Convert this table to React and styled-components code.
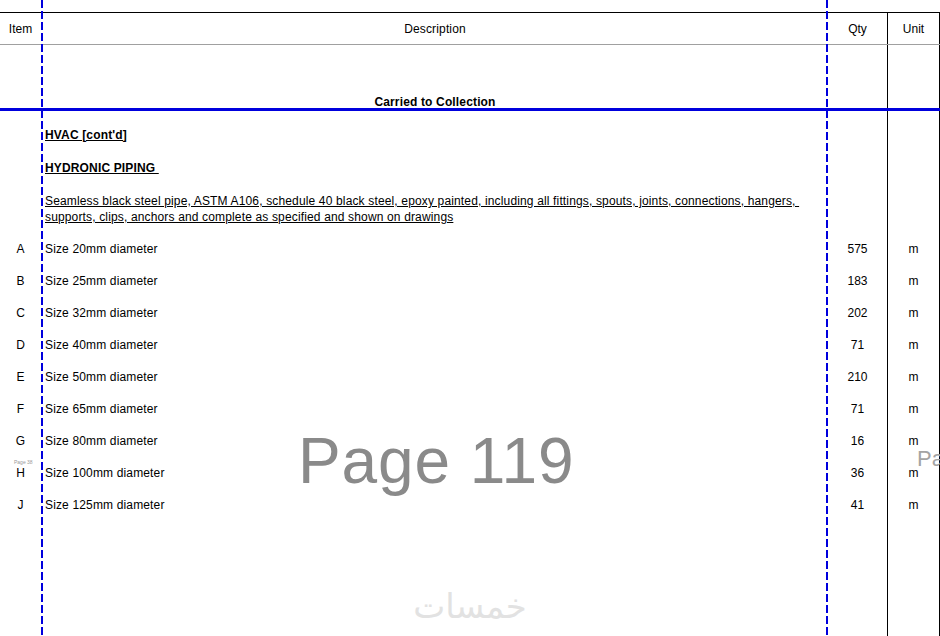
import styled, { createGlobalStyle } from "styled-components";

const items = [
  { id: "A", text: "Size 20mm diameter", qty: 575 },
  { id: "B", text: "Size 25mm diameter", qty: 183 },
  { id: "C", text: "Size 32mm diameter", qty: 202 },
  { id: "D", text: "Size 40mm diameter", qty: 71 },
  { id: "E", text: "Size 50mm diameter", qty: 210 },
  { id: "F", text: "Size 65mm diameter", qty: 71 },
  { id: "G", text: "Size 80mm diameter", qty: 16 },
  { id: "H", text: "Size 100mm diameter", qty: 36 },
  { id: "J", text: "Size 125mm diameter", qty: 41 },
];

const App = () => {
  return (
    <>
      <GlobalStyle />
      <Sheet>
        <Row $height={33} $header>
          <ItemCell>Item</ItemCell>
          <DescCell $center>Description</DescCell>
          <QtyCell>Qty</QtyCell>
          <UnitCell>Unit</UnitCell>
        </Row>
        <Row $height={66} $pageBreak $end>
          <ItemCell />
          <DescCell $center $bold>Carried to Collection</DescCell>
          <QtyCell />
          <UnitCell />
        </Row>
        <Row $height={7}>
          <ItemCell />
          <DescCell />
          <QtyCell />
          <UnitCell />
        </Row>
        <Row $height={33}>
          <ItemCell />
          <DescCell>
            <Heading>HVAC [cont'd]</Heading>
          </DescCell>
          <QtyCell />
          <UnitCell />
        </Row>
        <Row $height={33}>
          <ItemCell />
          <DescCell>
            <Heading>HYDRONIC PIPING&nbsp;</Heading>
          </DescCell>
          <QtyCell />
          <UnitCell />
        </Row>
        <Row $height={49} $padTop={1}>
          <ItemCell />
          <DescCell>
            <Spec>
              Seamless black steel pipe, ASTM A106, schedule 40 black steel, epoxy painted,
              including all fittings, spouts, joints, connections, hangers,&nbsp;
              <br />
              supports, clips, anchors and complete as specified and shown on drawings
            </Spec>
          </DescCell>
          <QtyCell />
          <UnitCell />
        </Row>
        {items.map((item) => (
          <Row key={item.id} $height={32}>
            <ItemCell>{item.id}</ItemCell>
            <DescCell>{item.text}</DescCell>
            <QtyCell>{item.qty}</QtyCell>
            <UnitCell>m</UnitCell>
          </Row>
        ))}
        <Row $fill>
          <ItemCell />
          <DescCell />
          <QtyCell />
          <UnitCell />
        </Row>

        <PageBreak $left={41} />
        <PageBreak $left={826} />
        <PageMark>Page 119</PageMark>
        <NextPageMark>Pa</NextPageMark>
        <TinyMark>Page 38</TinyMark>
        <Brand>خمسات</Brand>
      </Sheet>
    </>
  );
};

const GlobalStyle = createGlobalStyle`
  html, body {
    margin: 0;
    padding: 0;
    background: #fff;
    overflow: hidden;
  }
  body {
    font-family: "Liberation Sans", Arial, sans-serif;
    font-size: 12px;
    color: #000;
  }
`;

const Sheet = styled.div`
  position: relative;
  width: 940px;
  height: 636px;
  padding-top: 12px;
  box-sizing: border-box;
  display: flex;
  flex-direction: column;
  overflow: hidden;
`;

const Row = styled.div`
  display: grid;
  grid-template-columns: 42px 786px 60px 52px;
  box-sizing: border-box;
  height: ${(p) => (p.$height ? `${p.$height}px` : "auto")};
  flex: ${(p) => (p.$fill ? 1 : "none")};
  align-items: ${(p) => (p.$end ? "end" : "center")};
  border-top: ${(p) => (p.$header ? "1px solid #000" : "none")};
  border-bottom: ${(p) =>
    p.$header ? "1px solid #a0a0a0" : p.$pageBreak ? "3px solid #0000dd" : "none"};
  line-height: ${(p) => (p.$end ? "12px" : "normal")};

  & > div {
    height: 100%;
    box-sizing: border-box;
    padding-top: ${(p) => p.$padTop || 0}px;
    display: flex;
    align-items: ${(p) => (p.$end ? "flex-end" : "center")};
  }
`;

const ItemCell = styled.div`
  justify-content: center;
  padding-right: 1px;
`;

const DescCell = styled.div`
  justify-content: ${(p) => (p.$center ? "center" : "flex-start")};
  padding-left: ${(p) => (p.$center ? "0" : "3px")};
  font-weight: ${(p) => (p.$bold ? 700 : 400)};
  letter-spacing: 0.15px;
`;

const QtyCell = styled.div`
  justify-content: center;
  border-right: 1px solid #000;
`;

const UnitCell = styled.div`
  justify-content: center;
  border-right: 1px solid #000;
`;

const Heading = styled.span`
  font-weight: 700;
  text-decoration: underline;
`;

const Spec = styled.span`
  display: block;
  line-height: 16px;
  text-decoration: underline;
`;

const PageBreak = styled.div`
  position: absolute;
  top: 0;
  bottom: 0;
  left: ${(p) => p.$left}px;
  width: 2px;
  background: repeating-linear-gradient(
    to bottom,
    #0000dd 0 8px,
    transparent 8px 11px
  );

  &::before {
    content: "";
    position: absolute;
    top: 12px;
    bottom: 0;
    left: 1px;
    width: 1px;
    background: #000;
    z-index: -1;
  }
`;

const PageMark = styled.div`
  position: absolute;
  left: 298px;
  top: 429px;
  font-size: 64px;
  letter-spacing: 0.9px;
  line-height: 1;
  color: #8a8a8a;
  white-space: nowrap;
`;

const NextPageMark = styled.div`
  position: absolute;
  left: 917px;
  top: 448px;
  font-size: 22px;
  line-height: 1;
  color: #a4a4a4;
  white-space: nowrap;
`;

const TinyMark = styled.div`
  position: absolute;
  left: 14px;
  top: 460px;
  font-size: 5px;
  line-height: 1;
  color: #9a9a9a;
  white-space: nowrap;
`;

const Brand = styled.div`
  position: absolute;
  left: 408px;
  top: 584px;
  width: 124px;
  text-align: center;
  font-family: "DejaVu Sans", sans-serif;
  font-size: 34px;
  line-height: 1.3;
  color: #e2e2e2;
  direction: rtl;
`;

export default App;
